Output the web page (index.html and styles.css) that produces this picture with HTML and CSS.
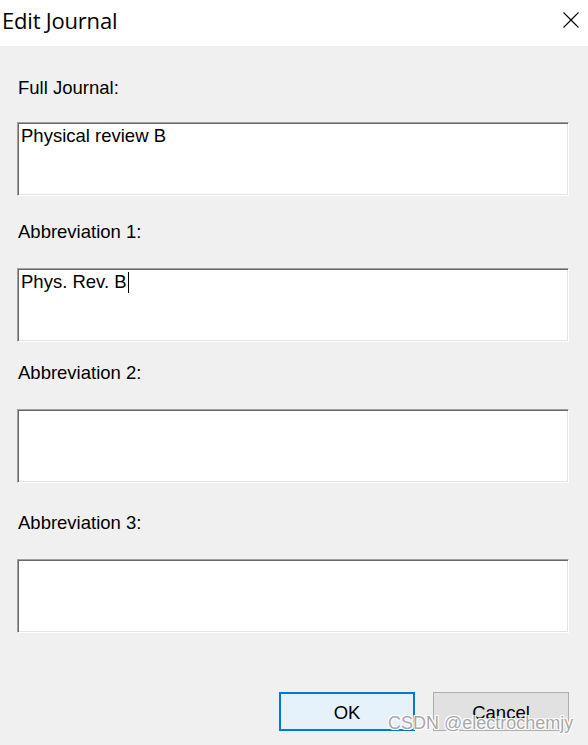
FILE: index.html
```html
<!DOCTYPE html>
<html>
<head>
<meta charset="utf-8">
<link rel="stylesheet" href="styles.css">
</head>
<body>
<div class="window">
  <div class="titlebar">
    <span class="title">Edit Journal</span>
    <svg class="close" width="16" height="16" viewBox="0 0 16 16"><path d="M0.5 0.5 L15.5 15.5 M15.5 0.5 L0.5 15.5" stroke="#000" stroke-width="1.1" fill="none"/></svg>
  </div>
  <div class="content">
    <div class="field f1">
      <div class="label">Full Journal:</div>
      <div class="box"><span class="val">Physical review B</span></div>
    </div>
    <div class="field f2">
      <div class="label">Abbreviation 1:</div>
      <div class="box"><span class="val">Phys. Rev. B</span><span class="caret"></span></div>
    </div>
    <div class="field f3">
      <div class="label">Abbreviation 2:</div>
      <div class="box"></div>
    </div>
    <div class="field f4">
      <div class="label">Abbreviation 3:</div>
      <div class="box"></div>
    </div>
    <div class="buttons">
      <div class="btn ok">OK</div>
      <div class="btn cancel">Cancel</div>
    </div>
  </div>
  <div class="watermark">CSDN @electrochemjy</div>
</div>
</body>
</html>
```

FILE: styles.css
```css
html, body {
  margin: 0;
  padding: 0;
  background: #f0f0f0;
}
.window {
  position: relative;
  width: 588px;
  height: 745px;
  background: #f0f0f0;
  overflow: hidden;
  font-family: "Liberation Sans", Arial, sans-serif;
  color: #000;
}
.titlebar {
  height: 46px;
  background: #fff;
  display: flex;
  align-items: flex-start;
  justify-content: space-between;
}
.title {
  font-family: "Open Sans", "Noto Sans", sans-serif;
  font-size: 22px;
  line-height: 30px;
  margin-top: 5px;
  margin-left: 2px;
  letter-spacing: -0.2px;
}
.close {
  margin-top: 12px;
  margin-right: 9px;
}
.content {
  padding: 31px 19px 0 17px;
}
.label {
  font-size: 18.5px;
  line-height: 22px;
  height: 22px;
  padding-left: 1px;
}
.box {
  margin-top: 23px;
  height: 74px;
  box-sizing: border-box;
  background: #fff;
  border: 1px solid;
  border-color: #a0a0a0 #fff #fff #a0a0a0;
  box-shadow: inset 1px 1px 0 #696969, inset -1px -1px 0 #e3e3e3;
  padding: 2px 3px;
  font-size: 18.5px;
  line-height: 22px;
  display: flex;
  align-items: flex-start;
}
.caret {
  display: inline-block;
  width: 1px;
  height: 21px;
  background: #000;
  margin-top: 1px;
  margin-left: 1px;
}
.f2 { margin-top: 25px; }
.f3 { margin-top: 20px; }
.f4 { margin-top: 29px; }
.f2 .box, .f3 .box, .f4 .box { margin-top: 25px; }
.buttons {
  margin-top: 59px;
  display: flex;
  justify-content: flex-end;
  gap: 18px;
}
.btn {
  width: 136px;
  height: 39px;
  box-sizing: border-box;
  display: flex;
  align-items: center;
  justify-content: center;
  font-size: 18.5px;
  padding-top: 2px;
}
.ok {
  background: #e5f1fb;
  border: 2px solid #0078d7;
}
.cancel {
  background: #e1e1e1;
  border: 1px solid #adadad;
}
.watermark {
  position: absolute;
  left: 388px;
  top: 711px;
  font-size: 18px;
  line-height: 24px;
  color: #a8a8a8;
  text-shadow: 1px 1px 0 #fff, -1px -1px 0 #fff, 1px -1px 0 #fff, -1px 1px 0 #fff;
  white-space: nowrap;
}
```
